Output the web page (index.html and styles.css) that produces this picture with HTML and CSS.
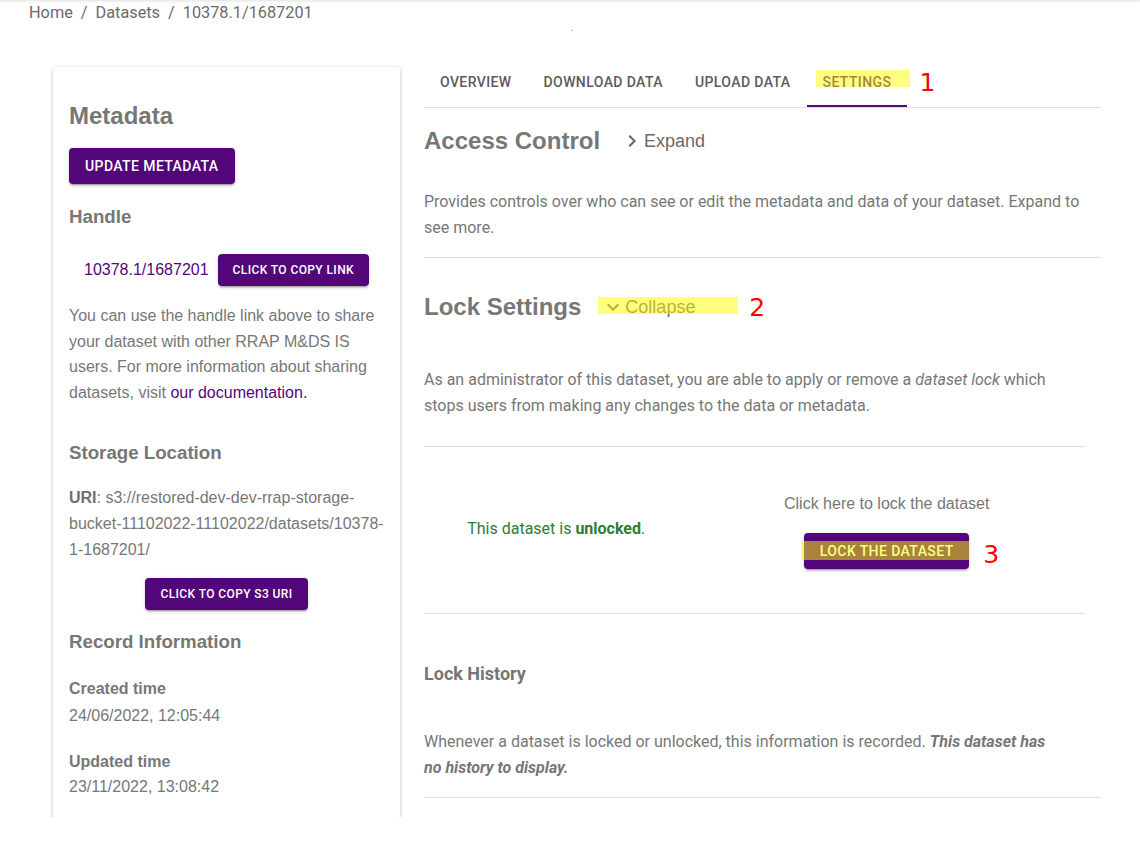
FILE: index.html
```html
<!DOCTYPE html>
<html lang="en">
<head>
<meta charset="utf-8">
<title>Dataset 10378.1/1687201</title>
<link rel="stylesheet" href="styles.css">
</head>
<body>
<header class="topbar">
  <nav class="crumbs">
    <span>Home</span><span class="sep">/</span><span>Datasets</span><span class="sep">/</span><span>10378.1/1687201</span>
  </nav>
  <div class="dot">.</div>
</header>
<main class="layout">
  <aside class="card">
    <h2 class="card-title">Metadata</h2>
    <button class="btn">Update Metadata</button>
    <h3 class="card-sub first">Handle</h3>
    <div class="handle-row">
      <a class="handle-link">10378.1/1687201</a>
      <button class="btn btn-sm">Click to copy link</button>
    </div>
    <p class="card-text share">You can use the handle link above to share your dataset with other RRAP M&amp;DS IS users. For more information about sharing datasets, visit <a class="doc-link">our documentation.</a></p>
    <h3 class="card-sub storage">Storage Location</h3>
    <p class="card-text uri"><b>URI</b>: s3://restored-dev-dev-rrap-storage-bucket-11102022-11102022/datasets/10378-1-1687201/</p>
    <button class="btn btn-sm btn-center">Click to copy S3 URI</button>
    <h3 class="card-sub record">Record Information</h3>
    <div class="field first-field">Created time</div>
    <div class="value">24/06/2022, 12:05:44</div>
    <div class="field second-field">Updated time</div>
    <div class="value last-value">23/11/2022, 13:08:42</div>
  </aside>

  <section class="content">
    <div class="tabs">
      <div class="tab">Overview</div>
      <div class="tab">Download Data</div>
      <div class="tab">Upload Data</div>
      <div class="tab active">Settings
        <span class="hl hl-tab"></span>
        <span class="mark mark-1">1</span>
      </div>
    </div>

    <div class="sec-head access">
      <h2 class="sec-title">Access Control</h2>
      <button class="toggle">
        <svg class="chev" viewBox="0 0 24 24" width="24" height="24"><path d="M10 6 8.59 7.41 13.17 12l-4.58 4.59L10 18l6-6z"/></svg>
        <span>Expand</span>
      </button>
    </div>
    <p class="text access-text">Provides controls over who can see or edit the metadata and data of your dataset. Expand to see more.</p>
    <div class="rule rule-1"></div>

    <div class="sec-head lock">
      <h2 class="sec-title">Lock Settings</h2>
      <button class="toggle">
        <svg class="chev" viewBox="0 0 24 24" width="24" height="24"><path d="M16.59 8.59 12 13.17 7.41 8.59 6 10l6 6 6-6z"/></svg>
        <span>Collapse</span>
        <span class="hl hl-collapse"></span>
        <span class="mark mark-2">2</span>
      </button>
    </div>

    <div class="lock-body">
      <p class="text lock-text">As an administrator of this dataset, you are able to apply or remove a <i>dataset lock</i> which stops users from making any changes to the data or metadata.</p>
      <div class="rule rule-2"></div>
      <div class="status">
        <div class="status-left">This dataset is <b>unlocked</b>.</div>
        <div class="status-right">
          <div class="hint">Click here to lock the dataset</div>
          <button class="btn lock-btn">Lock the dataset
            <span class="hl hl-lock"></span>
            <span class="mark mark-3">3</span>
          </button>
        </div>
      </div>
      <div class="rule"></div>
      <h4 class="history-title">Lock History</h4>
      <p class="text history-text">Whenever a dataset is locked or unlocked, this information is recorded. <b><i>This dataset has no history to display.</i></b></p>
    </div>
    <div class="rule rule-last"></div>
  </section>
</main>
</body>
</html>
```

FILE: styles.css
```css
* { box-sizing: border-box; }

body {
  margin: 0;
  background: #fff;
  font-family: "Liberation Sans", Arial, sans-serif;
  color: #777;
}

.topbar {
  height: 40px;
  position: relative;
  box-shadow: inset 0 3px 3px -2px rgba(0, 0, 0, 0.12);
}

.crumbs {
  padding-left: 29px;
  padding-top: 1px;
  font-family: Roboto, sans-serif;
  font-size: 16.3px;
  line-height: 24px;
  color: #6b6b6b;
  display: flex;
}

.crumbs .sep {
  margin: 0 8px;
}

.dot {
  text-align: center;
  font-family: Roboto, sans-serif;
  font-size: 10px;
  line-height: 10px;
  color: #888;
  margin-top: -2px;
  padding-left: 4px;
}

.layout {
  display: flex;
  align-items: flex-start;
  gap: 24px;
  padding-left: 53px;
  padding-top: 19px;
}

/* ---------- left card ---------- */
.card {
  width: 347px;
  margin-top: 8px;
  padding: 0 16px 17px;
  display: flex;
  flex-direction: column;
  align-items: flex-start;
  background: #fff;
  border-radius: 2px;
  box-shadow: 0 2px 4px rgba(70, 70, 170, 0.28), 0 0 2px rgba(70, 70, 170, 0.2);
}

.card-title {
  margin: 35px 0 0;
  font-size: 24px;
  line-height: 28px;
  font-weight: bold;
  color: #777;
}

.card > .btn:first-of-type { margin-top: 18px; }

.btn {
  position: relative;
  height: 36px;
  padding: 0 16px;
  border: none;
  border-radius: 4px;
  background: #53067a;
  color: #fff;
  font-family: Roboto, sans-serif;
  font-weight: 500;
  font-size: 14px;
  letter-spacing: 0.4px;
  text-transform: uppercase;
  box-shadow: 0 3px 1px -2px rgba(0, 0, 0, 0.2), 0 2px 2px 0 rgba(0, 0, 0, 0.14), 0 1px 5px 0 rgba(0, 0, 0, 0.12);
  cursor: pointer;
}

.btn-sm {
  height: 32px;
  padding: 0 15px;
  font-size: 12px;
}

.card-sub {
  margin: 0;
  font-size: 18.7px;
  line-height: 22px;
  font-weight: bold;
  color: #777;
}

.card-sub.first { margin-top: 22px; }
.card-sub.storage { margin-top: 37px; }
.card-sub.record { margin-top: 21px; }

.handle-row {
  margin-top: 26px;
  display: flex;
  align-items: center;
}

.handle-link {
  padding-left: 15px;
  margin-right: 9px;
  font-size: 16px;
  color: #53067a;
}

.card-text {
  margin: 0;
  font-size: 16px;
  line-height: 25.6px;
  color: #777;
}

.card-text.share { margin-top: 17px; }
.card-text.uri { margin-top: 21px; }
.card-text.uri b { color: #6f6f6f; }

.doc-link { color: #53067a; }

.btn-center {
  align-self: center;
  margin-top: 16px;
}

.field {
  font-size: 16px;
  line-height: 24px;
  font-weight: bold;
  color: #777;
}

.first-field { margin-top: 24px; }
.second-field { margin-top: 21px; }

.value {
  font-size: 16px;
  line-height: 26px;
  padding-top: 2px;
  color: #777;
}

.value.last-value { padding-top: 0; }

/* ---------- right content ---------- */
.content {
  width: 677px;
  display: flex;
  flex-direction: column;
}

.tabs {
  display: flex;
  border-bottom: 1px solid #e0e0e0;
}

.tab {
  position: relative;
  height: 48px;
  padding: 0 16px 3px;
  display: flex;
  align-items: center;
  font-family: Roboto, sans-serif;
  font-weight: 500;
  font-size: 14px;
  letter-spacing: 0.4px;
  text-transform: uppercase;
  color: #5c5c5c;
}

.tab.active {
  color: #53067a;
}

.tab.active::after {
  content: "";
  position: absolute;
  left: 0;
  right: 0;
  bottom: 0;
  height: 2px;
  background: #53067a;
}

/* annotation overlays */
.hl {
  position: absolute;
  background: rgba(255, 255, 0, 0.5);
  pointer-events: none;
}

.hl-tab { left: 9px; top: 11px; width: 94px; height: 17px; }
.hl-collapse { left: 5px; top: 8px; width: 140px; height: 17px; }
.hl-lock { left: -3px; top: 8px; width: 168px; height: 19px; }

.mark {
  position: absolute;
  font-family: "DejaVu Sans", sans-serif;
  font-size: 25px;
  line-height: 26px;
  color: #ff0000;
  font-weight: normal;
  letter-spacing: 0;
  text-transform: none;
}

.mark-1 { left: 113px; top: 11px; }
.mark-2 { left: 156px; top: 6px; }
.mark-3 { left: 179px; top: 9px; }

.sec-head {
  display: flex;
  align-items: center;
  height: 36px;
}

.sec-head.access { margin-top: 15px; }
.sec-head.lock { margin-top: 31px; }

.sec-title {
  margin: 0 12px 0 0;
  font-size: 24px;
  line-height: 28px;
  font-weight: bold;
  color: #777;
}

.toggle {
  position: relative;
  height: 36px;
  padding: 0 8px;
  border: none;
  background: none;
  display: inline-flex;
  align-items: center;
  font-family: "Liberation Sans", Arial, sans-serif;
  font-size: 18px;
  color: #6a6a6a;
  cursor: pointer;
}

.chev {
  fill: #666;
  display: block;
}

.text {
  margin: 0;
  font-family: Roboto, sans-serif;
  font-size: 16px;
  line-height: 25.6px;
  color: #777;
}

.access-text { margin-top: 30px; }

.rule {
  height: 1px;
  background: #dedede;
}

.rule-1 { margin-top: 17px; }

.lock-body {
  width: 661px;
  display: flex;
  flex-direction: column;
}

.lock-text {
  margin-top: 42px;
  max-width: 648px;
}

.rule-2 { margin-top: 28px; }

.status {
  display: grid;
  grid-template-columns: 40% 60%;
  align-items: center;
  padding: 45px 0 44px;
}

.status-left {
  text-align: center;
  font-family: Roboto, sans-serif;
  font-size: 16px;
  color: #2e7d32;
  margin-top: -4px;
}

.status-right {
  display: flex;
  flex-direction: column;
  align-items: center;
}

.hint {
  font-size: 16px;
  line-height: 24px;
  color: #777;
}

.lock-btn {
  margin-top: 17px;
  width: 165px;
  padding: 0;
}

.history-title {
  margin: 48px 0 0;
  font-family: Roboto, sans-serif;
  font-size: 18px;
  line-height: 24px;
  font-weight: bold;
  color: #757575;
}

.history-text {
  margin-top: 43px;
  max-width: 636px;
}

.rule-last { margin-top: 16px; }
```
